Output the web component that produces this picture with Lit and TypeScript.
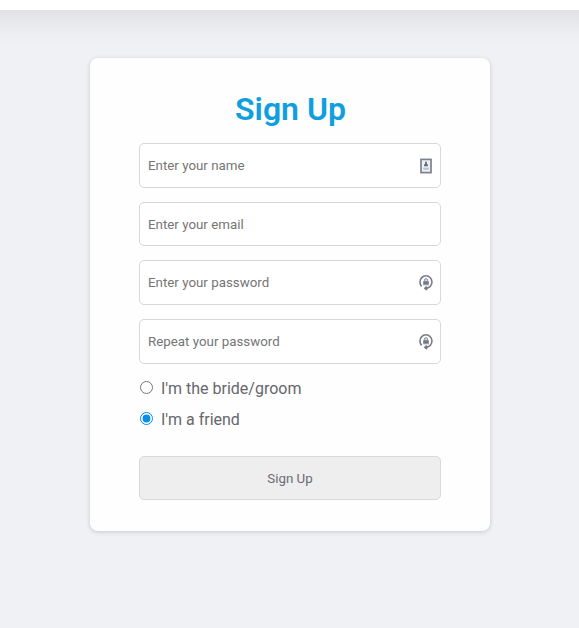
import { LitElement, html, css, svg, nothing } from "lit";
import { customElement, property } from "lit/decorators.js";

type Icon = "contact" | "lock" | "";

const contactIcon = svg`
  <rect x="3" y="2.4" width="10" height="13.2" fill="#edf1f5" stroke="#7d8290" stroke-width="1.7"/>
  <rect x="5.2" y="10.6" width="5.6" height="2.2" fill="#b5c5cf"/>
  <circle cx="8" cy="5.6" r="1" fill="#6b6f7d"/>
  <path d="M7.2 5.5h1.6v1.3l1.2 1V9.3H6V7.8l1.2-1Z" fill="#666b79"/>`;

const lockIcon = svg`
  <path d="M3.6 12.4A6 6.3 0 1 1 12.4 12.3Q11 13.9 8.2 14.3" fill="none" stroke="#7b7a89" stroke-width="1.6"/>
  <path d="M8.2 11.9L5.7 14.3L8.2 16.8L10.3 14.3Z" fill="#7b7a89"/>
  <path d="M6.4 7.6V6.2a1.6 1.6 0 0 1 3.2 0V7.6" fill="#c9d5de" stroke="#93939f" stroke-width="1"/>
  <rect x="5.2" y="7.2" width="5.6" height="3.7" fill="#70788a"/>
  <path d="M5.2 11h5.6" stroke="#a7bac6" stroke-width=".9"/>`;

@customElement("form-field")
class FormField extends LitElement {
  @property() label = "";
  @property() type = "text";
  @property() icon: Icon = "";

  static styles = css`
    :host { display: flex; position: relative; height: 44.5px; }
    input {
      width: 100%; height: 100%; box-sizing: border-box; margin: 0;
      padding: 0 8px; border: 1px solid #d8d8d8; border-radius: 5px;
      background: #fff; outline: none;
      font: 13.333px Roboto, sans-serif; color: #666;
    }
    input::placeholder { color: #757575; opacity: 1; }
    svg { position: absolute; right: 7px; top: 14px; width: 16px; height: 17px; }
    svg.lock { top: 13.6px; }
  `;

  render() {
    return html`
      <input type=${this.type} placeholder=${this.label} />
      ${this.icon
        ? html`<svg class=${this.icon} viewBox="0 0 16 17">${this.icon === "contact" ? contactIcon : lockIcon}</svg>`
        : nothing}
    `;
  }
}

@customElement("app-root")
class AppRoot extends LitElement {
  static styles = css`
    :host {
      display: flex; flex-direction: column; height: 100vh;
      background: #f0f1f4; font-family: Roboto, sans-serif; color: #65676c;
      overflow: hidden;
    }
    header { height: 10px; flex: none; background: #fff; }
    main {
      flex: 1; display: flex; justify-content: center; align-items: flex-start;
      padding: 48px 0 0 1px;
      background: linear-gradient(#e1e1e6, #e7e8ec 12px, #eeeff2 26px, #f0f1f4 38px);
    }
    .card {
      box-sizing: border-box; width: 400px; height: 473px;
      padding: 32px 49px 0; border-radius: 8px; background: #fefefe;
      box-shadow: 0 1px 4px rgba(60, 70, 95, 0.24);
    }
    h1 {
      margin: 0 0 15.3px; height: 38px; line-height: 38px;
      padding-left: 1px;
      text-align: center; font-size: 32px; font-weight: 650; color: #0f9fdf;
    }
    .fields { display: flex; flex-direction: column; gap: 14.1px; }
    .choices { display: flex; flex-direction: column; gap: 12px; margin-top: 15px; }
    .choice { display: flex; align-items: center; height: 19px; font-size: 16px; }
    .choice input { width: 13px; height: 13px; margin: -2px 8px 0 1px; accent-color: #078ee5; }
    button {
      display: block; width: 100%; height: 44px; margin: 27px 0 0; padding: 1px 0 0;
      border: 1px solid #d8d8d8; border-radius: 5px; background: #eee;
      font: 13.333px Roboto, sans-serif; color: #6c6b72;
    }
  `;

  render() {
    return html`
      <header></header>
      <main>
        <form class="card">
          <h1>Sign Up</h1>
          <div class="fields">
            <form-field label="Enter your name" icon="contact"></form-field>
            <form-field label="Enter your email" type="email"></form-field>
            <form-field label="Enter your password" type="password" icon="lock"></form-field>
            <form-field label="Repeat your password" type="password" icon="lock"></form-field>
          </div>
          <div class="choices">
            <label class="choice"><input type="radio" name="role" />I'm the bride/groom</label>
            <label class="choice"><input type="radio" name="role" checked />I'm a friend</label>
          </div>
          <button type="button">Sign Up</button>
        </form>
      </main>
    `;
  }
}
